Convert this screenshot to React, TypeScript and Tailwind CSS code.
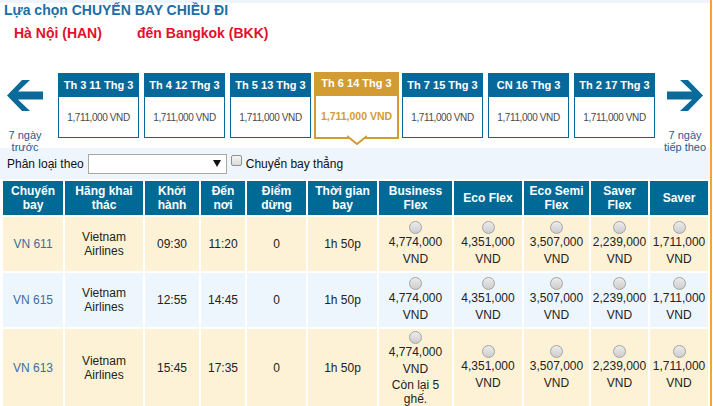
import React from "react";

const dates = [
  { label: "Th 3 11 Thg 3", price: "1,711,000 VND" },
  { label: "Th 4 12 Thg 3", price: "1,711,000 VND" },
  { label: "Th 5 13 Thg 3", price: "1,711,000 VND" },
  { label: "Th 6 14 Thg 3", price: "1,711,000 VND", active: true },
  { label: "Th 7 15 Thg 3", price: "1,711,000 VND" },
  { label: "CN 16 Thg 3", price: "1,711,000 VND" },
  { label: "Th 2 17 Thg 3", price: "1,711,000 VND" },
];

const headers = [
  ["Chuyến", "bay"],
  ["Hãng khai", "thác"],
  ["Khởi", "hành"],
  ["Đến", "nơi"],
  ["Điểm", "dừng"],
  ["Thời gian", "bay"],
  ["Business", "Flex"],
  ["Eco Flex"],
  ["Eco Semi", "Flex"],
  ["Saver", "Flex"],
  ["Saver"],
];

const prices = ["4,774,000", "4,351,000", "3,507,000", "2,239,000", "1,711,000"];

const flights = [
  { no: "VN 611", dep: "09:30", arr: "11:20", bg: "bg-[#fdf2d6]", h: "h-[54px]" },
  { no: "VN 615", dep: "12:55", arr: "14:45", bg: "bg-[#eef6fd]", h: "h-[54px]" },
  { no: "VN 613", dep: "15:45", arr: "17:35", bg: "bg-[#fdf2d6]", h: "h-[78px]", seats: true },
];

const cols =
  "grid grid-cols-[60px_78px_54px_44px_59px_69px_73px_68px_65px_57px_58px] gap-x-[2px]";

const ArrowLeft = () => (
  <svg width="36" height="31" viewBox="0 0 36 31">
    <polygon points="0,15.5 15,0 23,0 11,11.5 36,11.5 36,19.5 11,19.5 23,31 15,31" fill="#0a6a9a" />
  </svg>
);

const ArrowRight = () => (
  <svg width="36" height="31" viewBox="0 0 36 31">
    <polygon points="36,15.5 21,0 13,0 25,11.5 0,11.5 0,19.5 25,19.5 13,31 21,31" fill="#0a6a9a" />
  </svg>
);

const Radio = () => (
  <div className="w-[13px] h-[13px] rounded-full border border-[#a3a3a3] bg-gradient-to-b from-[#ececec] to-[#cdcdcd]" />
);

export default function App() {
  return (
    <div className="w-[712px] min-h-[406px] border-r-2 border-[#f0a732] bg-white font-['Liberation_Sans',Arial,sans-serif]">
      <div className="h-[3px] bg-[#eef4fb]" />
      <div className="pl-[4px] text-[14px] leading-[14px] font-bold text-[#1c6ea4]">
        Lựa chọn CHUYẾN BAY CHIỀU ĐI
      </div>
      <div className="mt-[7px] pl-[14px] text-[14px] leading-[18px] font-bold text-[#e3102b] flex">
        <span className="w-[123px]">Hà Nội (HAN)</span>
        <span>đến Bangkok (BKK)</span>
      </div>

      {/* date tabs */}
      <div className="mt-[30px] h-[76px] flex items-start">
        <div className="w-[50px] pt-[8px] flex flex-col items-center">
          <ArrowLeft />
          <div className="mt-[18px] text-[11px] leading-[12px] text-[#1f5b8c] text-center">
            7 ngày
            <br />
            trước
          </div>
        </div>
        <div className="ml-[8px] flex items-start gap-[5px]">
          {dates.map((d) =>
            d.active ? (
              <div
                key={d.label}
                className="relative -mx-[2px] w-[85px] h-[67px] border-2 border-[#d39c33] flex flex-col bg-white"
              >
                <div className="h-[22px] bg-[#d39c33] text-white font-bold text-[11px] leading-[18px] text-center">
                  {d.label}
                </div>
                <div className="flex-1 flex items-center justify-center text-[10.5px] font-bold text-[#d39c33]">
                  {d.price}
                </div>
                <svg
                  className="absolute left-1/2 -translate-x-1/2 top-full -mt-[2px]"
                  width="20"
                  height="10"
                  viewBox="0 0 20 10"
                >
                  <polygon points="0,0 20,0 10,9" fill="#fff" />
                  <polyline points="0,1 10,9 20,1" fill="none" stroke="#d39c33" strokeWidth="2" />
                </svg>
              </div>
            ) : (
              <div
                key={d.label}
                className="mt-[1px] w-[81px] h-[65px] border border-[#07699a] flex flex-col bg-white"
              >
                <div className="h-[23px] bg-[#07699a] text-white font-bold text-[11px] leading-[23px] text-center">
                  {d.label}
                </div>
                <div className="flex-1 flex items-center justify-center text-[10px] tracking-[-0.4px] text-[#4a4a4a]">
                  {d.price}
                </div>
              </div>
            )
          )}
        </div>
        <div className="ml-[5px] w-[50px] pt-[8px] flex flex-col items-center">
          <ArrowRight />
          <div className="mt-[18px] text-[11px] leading-[12px] text-[#1f5b8c] text-center">
            7 ngày
            <br />
            tiếp theo
          </div>
        </div>
      </div>

      {/* filter */}
      <div className="h-[31px] bg-[#eef5fc] flex items-center pl-[7px] text-[12px] text-[#111]">
        <span>Phân loại theo</span>
        <div className="ml-[4px] w-[139px] h-[20px] border border-[#a9a9a0] bg-white flex items-center justify-end pr-[5px]">
          <svg width="8" height="7" viewBox="0 0 8 7">
            <polygon points="0,0 8,0 4,7" fill="#111" />
          </svg>
        </div>
        <div className="ml-[4px] -mt-[6px] w-[11px] h-[11px] rounded-[2px] border border-[#8f8f8f] bg-gradient-to-b from-[#f6f6f6] to-[#dadada]" />
        <span className="ml-[4px]">Chuyển bay thẳng</span>
      </div>

      {/* table */}
      <div className="mt-[2px] ml-[3px] flex flex-col gap-y-[2px]">
        <div className={`${cols} h-[34px]`}>
          {headers.map((h, i) => (
            <div
              key={i}
              className="bg-[#006a96] text-white font-bold text-[12px] leading-[14px] flex items-center justify-center text-center"
            >
              <div>
                {h[0]}
                {h[1] && (
                  <>
                    <br />
                    {h[1]}
                  </>
                )}
              </div>
            </div>
          ))}
        </div>
        {flights.map((f) => (
          <div key={f.no} className={`${cols} ${f.h} text-[12px] text-[#222]`}>
            <div className={`${f.bg} flex items-center justify-center text-[#3b6e9b]`}>{f.no}</div>
            <div className={`${f.bg} flex items-center justify-center text-center leading-[14px]`}>
              <div>
                Vietnam
                <br />
                Airlines
              </div>
            </div>
            <div className={`${f.bg} flex items-center justify-center`}>{f.dep}</div>
            <div className={`${f.bg} flex items-center justify-center`}>{f.arr}</div>
            <div className={`${f.bg} flex items-center justify-center`}>0</div>
            <div className={`${f.bg} flex items-center justify-center`}>1h 50p</div>
            {prices.map((p, i) => (
              <div key={p} className={`${f.bg} flex flex-col items-center justify-center text-center`}>
                <Radio />
                <div className="leading-[17px]">
                  {p}
                  <br />
                  VND
                </div>
                {f.seats && i === 0 && (
                  <div className="leading-[14px]">
                    Còn lại 5
                    <br />
                    ghế.
                  </div>
                )}
              </div>
            ))}
          </div>
        ))}
      </div>
    </div>
  );
}
